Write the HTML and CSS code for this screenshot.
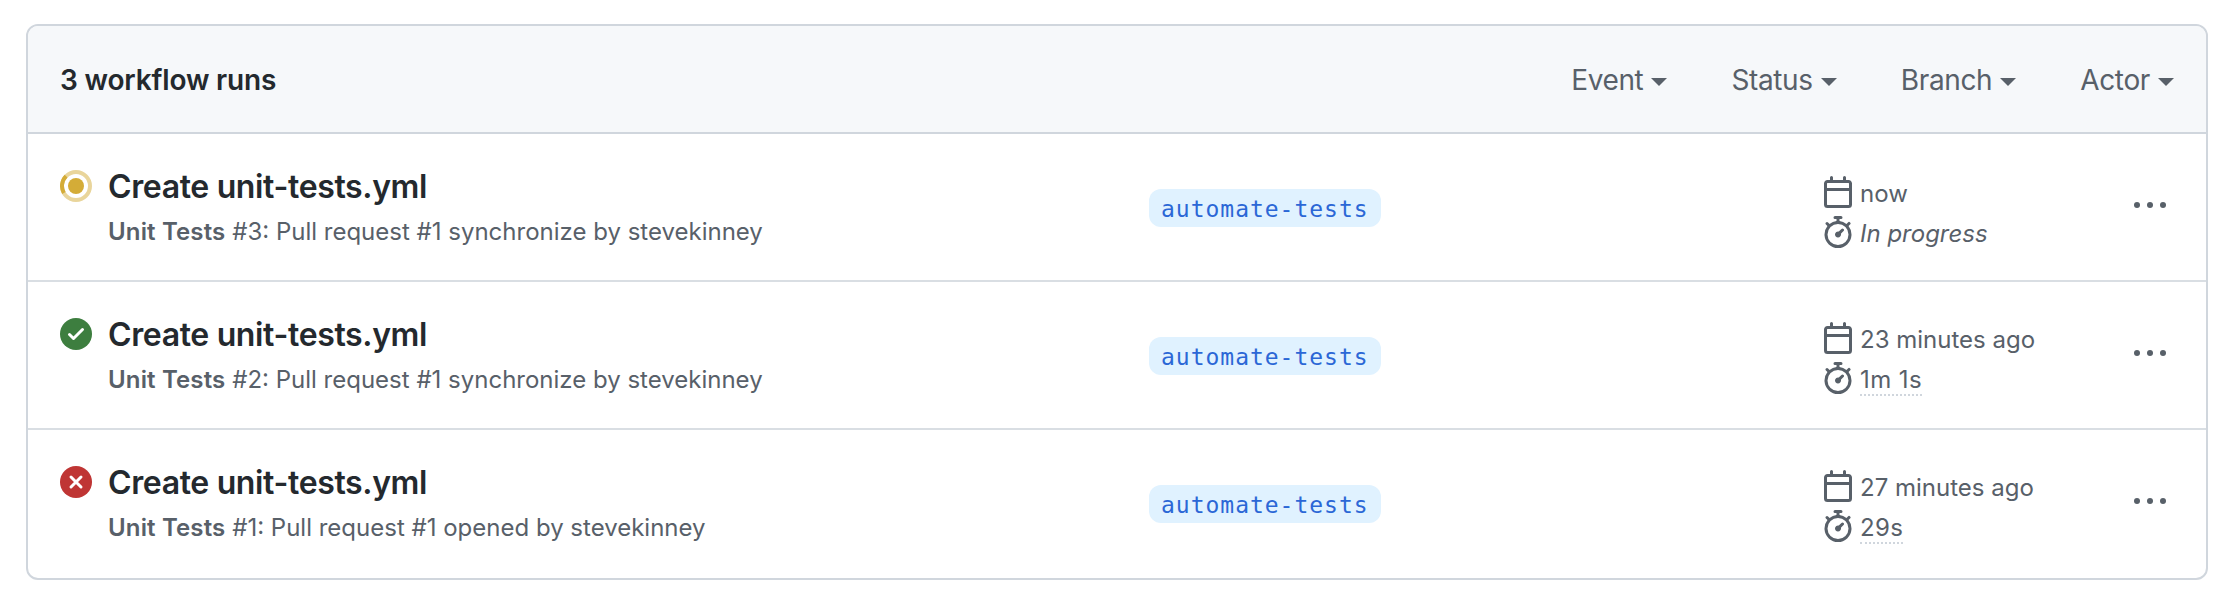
FILE: index.html
```html
<!DOCTYPE html>
<html lang="en">
<head>
<meta charset="utf-8">
<title>Workflow runs</title>
<link rel="stylesheet" href="styles.css">
</head>
<body>
<svg class="sprite" width="0" height="0">
  <symbol id="calendar" viewBox="0 0 16 16"><path fill-rule="evenodd" d="M4.75 0a.75.75 0 01.75.75V2h5V.75a.75.75 0 011.5 0V2h1.25c.966 0 1.75.784 1.75 1.75v10.5A1.75 1.75 0 0113.25 16H2.75A1.75 1.75 0 011 14.25V3.75C1 2.784 1.784 2 2.75 2H4V.75A.75.75 0 014.75 0zm-2 3.5a.25.25 0 00-.25.25V6h11V3.75a.25.25 0 00-.25-.25H2.75zm-.25 4v6.75c0 .138.112.25.25.25h10.5a.25.25 0 00.25-.25V7.5h-11z"/></symbol>
  <symbol id="stopwatch" viewBox="0 0 16 16"><path fill-rule="evenodd" d="M5.75.75A.75.75 0 016.5 0h3a.75.75 0 010 1.5h-.75v1l-.001.041a6.718 6.718 0 013.464 1.435l.007-.006.75-.75a.75.75 0 111.06 1.06l-.75.75-.006.007a6.75 6.75 0 11-10.548 0L2.72 5.03l-.75-.75a.75.75 0 011.06-1.06l.75.75.007.006A6.718 6.718 0 017.25 2.541V1.5H6.5a.75.75 0 01-.75-.75zM8 14.5A5.25 5.25 0 108 4a5.25 5.25 0 000 10.5zm.389-6.7l1.33-1.33a.75.75 0 111.061 1.06L9.45 8.861A1.502 1.502 0 018 10.75a1.5 1.5 0 11.389-2.95z"/></symbol>
  <symbol id="kebab" viewBox="0 0 16 16"><circle cx="1.5" cy="8" r="1.5"/><circle cx="8" cy="8" r="1.5"/><circle cx="14.5" cy="8" r="1.5"/></symbol>
</svg>
<main class="runs">
  <header class="runs-header">
    <h1 class="runs-count">3 workflow runs</h1>
    <nav class="filters">
      <span class="filter"><span class="filter-label">Event</span><i class="caret"></i></span>
      <span class="filter"><span class="filter-label">Status</span><i class="caret"></i></span>
      <span class="filter"><span class="filter-label">Branch</span><i class="caret"></i></span>
      <span class="filter"><span class="filter-label">Actor</span><i class="caret"></i></span>
    </nav>
  </header>

  <section class="run run-active">
    <svg class="status" viewBox="0 0 16 16"><g fill="none" stroke="#d4ac37" stroke-width="2"><circle cx="8" cy="8" r="7" opacity=".5"/><path d="M3.05 3.05A7 7 0 0 0 1.94 11.5"/></g><circle cx="8" cy="8" r="4" fill="#d4ac37"/></svg>
    <div class="summary">
      <h2 class="run-title">Create unit-tests.yml</h2>
      <p class="run-detail"><b>Unit Tests</b> #3: Pull request #1 synchronize by stevekinney</p>
    </div>
    <div class="branch-cell"><span class="branch">automate-tests</span></div>
    <div class="times">
      <div class="time"><svg class="icon"><use href="#calendar"/></svg><span>now</span></div>
      <div class="time"><svg class="icon"><use href="#stopwatch"/></svg><em class="progress">In progress</em></div>
    </div>
    <svg class="icon menu"><use href="#kebab"/></svg>
  </section>

  <section class="run">
    <svg class="status" viewBox="0 0 16 16"><circle cx="8" cy="8" r="8" fill="#3d7e3f"/><path d="M4.75 8.25l2 2 4.5-4.5" fill="none" stroke="#fff" stroke-width="1.5" stroke-linecap="round" stroke-linejoin="round"/></svg>
    <div class="summary">
      <h2 class="run-title">Create unit-tests.yml</h2>
      <p class="run-detail"><b>Unit Tests</b> #2: Pull request #1 synchronize by stevekinney</p>
    </div>
    <div class="branch-cell"><span class="branch">automate-tests</span></div>
    <div class="times">
      <div class="time"><svg class="icon"><use href="#calendar"/></svg><span>23 minutes ago</span></div>
      <div class="time"><svg class="icon"><use href="#stopwatch"/></svg><span class="duration">1m 1s</span></div>
    </div>
    <svg class="icon menu"><use href="#kebab"/></svg>
  </section>

  <section class="run">
    <svg class="status" viewBox="0 0 16 16"><circle cx="8" cy="8" r="8" fill="#bf3534"/><path d="M5.5 5.5l5 5m0-5l-5 5" fill="none" stroke="#fff" stroke-width="1.5" stroke-linecap="round"/></svg>
    <div class="summary">
      <h2 class="run-title">Create unit-tests.yml</h2>
      <p class="run-detail"><b>Unit Tests</b> #1: Pull request #1 opened by stevekinney</p>
    </div>
    <div class="branch-cell"><span class="branch">automate-tests</span></div>
    <div class="times">
      <div class="time"><svg class="icon"><use href="#calendar"/></svg><span>27 minutes ago</span></div>
      <div class="time"><svg class="icon"><use href="#stopwatch"/></svg><span class="duration">29s</span></div>
    </div>
    <svg class="icon menu"><use href="#kebab"/></svg>
  </section>
</main>
</body>
</html>
```
FILE: styles.css
```css
* { box-sizing: border-box; }

body {
  margin: 0;
  padding: 24px 22px 26px 26px;
  background: #fff;
  color: #24292e;
  font-family: Inter, "Liberation Sans", sans-serif;
}

h1, h2, p { margin: 0; }
svg { display: block; }
.sprite { position: absolute; }

.runs {
  height: 556px;
  border: 2px solid #d0d6dd;
  border-radius: 12px;
  overflow: hidden;
}

.runs-header {
  display: flex;
  align-items: center;
  justify-content: space-between;
  height: 108px;
  padding: 2px 32px 0;
  background: #f6f8fa;
  border-bottom: 2px solid #d0d6dd;
}

.runs-count {
  font-size: 28px;
  font-weight: 600;
  line-height: 42px;
  letter-spacing: -0.16px;
}

.filters { display: flex; gap: 64px; color: #586069; }
.filter { display: flex; align-items: center; gap: 8px; }
.filter-label { font-size: 28px; line-height: 42px; letter-spacing: -0.36px; }

.caret {
  margin-top: 4px;
  border: 8px solid transparent;
  border-top-color: currentColor;
  border-bottom: 0;
}

.run {
  display: grid;
  grid-template-columns: 32px 1041px 689px 312px 32px;
  align-items: start;
  height: 148px;
  padding: 36px 0 0 32px;
  border-bottom: 2px solid #d9dee3;
  color: #586069;
}
.run:last-child { border-bottom: 0; }

.status { width: 32px; height: 32px; }
.summary { padding-left: 16px; }

.run-title {
  margin-top: -7px;
  color: #24292e;
  font-size: 32px;
  font-weight: 600;
  line-height: 48px;
  letter-spacing: -0.36px;
}

.run-detail {
  margin-top: 3px;
  font-size: 24px;
  line-height: 36px;
}
.run-detail b { font-weight: 600; letter-spacing: 0.15px; }

.branch-cell { padding: 19px 0 0 16px; }
.branch {
  display: inline-block;
  height: 38px;
  padding: 0 12px;
  border-radius: 12px;
  background: #e0f2ff;
  color: #2b67d6;
  font-family: "DejaVu Sans Mono", monospace;
  font-size: 23px;
  line-height: 40px;
  letter-spacing: 0.98px;
}

.times { padding-top: 4px; }
.run-active .times { padding-top: 6px; }
.time {
  display: flex;
  gap: 6px;
  height: 40px;
  font-size: 24px;
  line-height: 35px;
  white-space: nowrap;
}
.icon { width: 32px; height: 32px; fill: currentColor; flex: none; }
.duration { height: 34px; border-bottom: 2px dotted #d0d6dd; letter-spacing: 0.4px; }
.menu { margin-top: 19px; }
```
